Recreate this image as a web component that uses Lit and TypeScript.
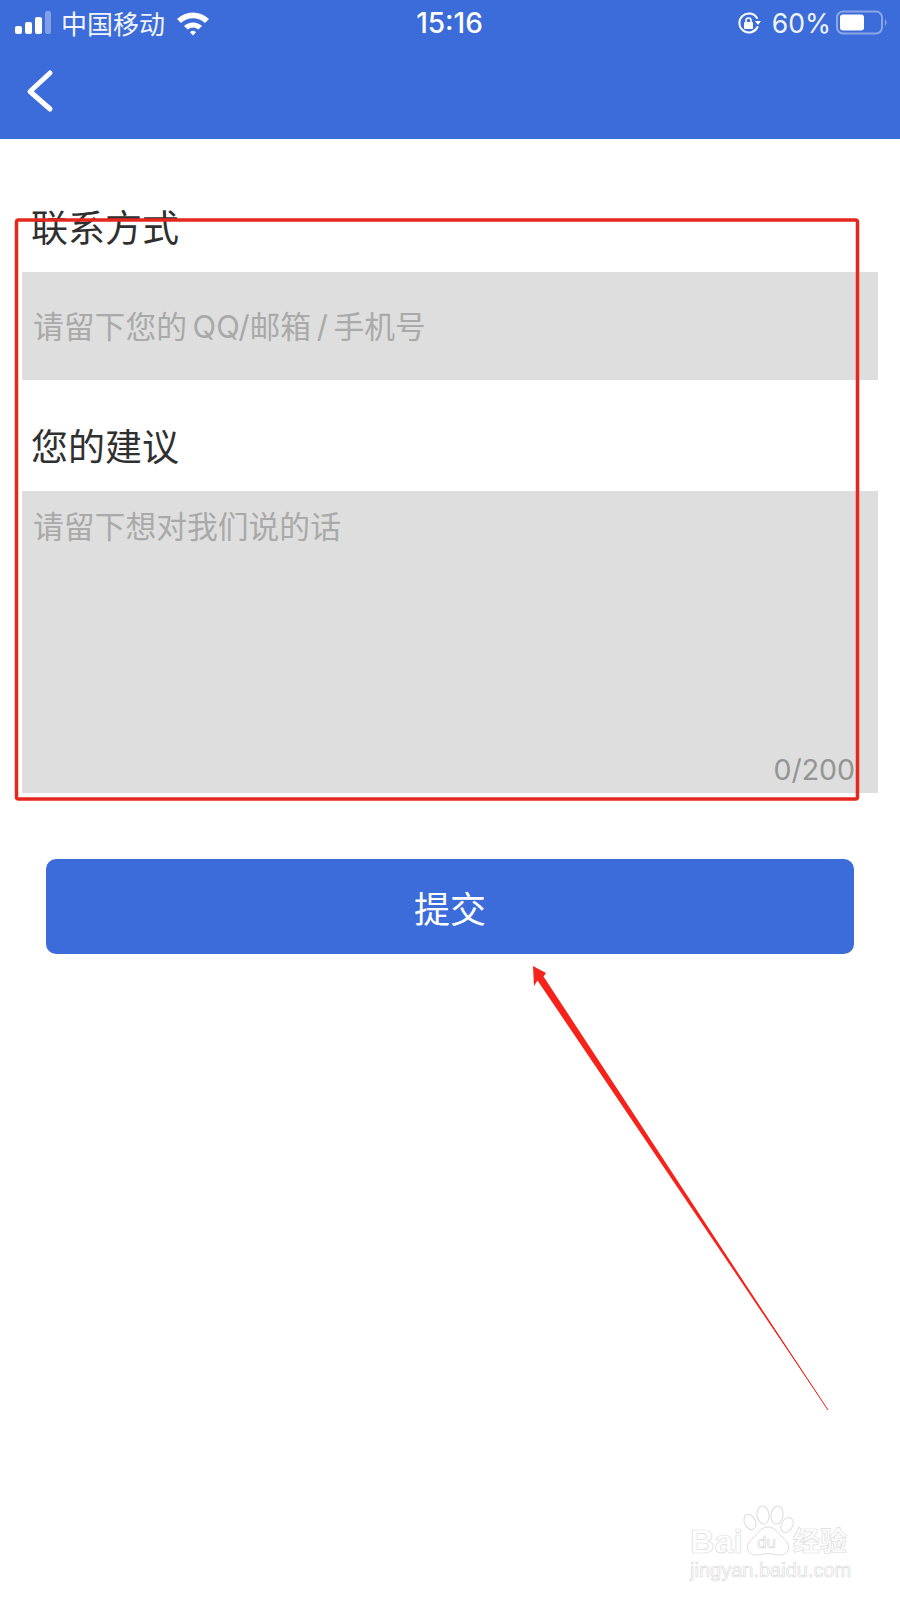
import { LitElement, html, css, svg } from "lit";
import { customElement } from "lit/decorators.js";

@customElement("app-root")
export class AppRoot extends LitElement {
  static styles = css`
    :host {
      display: block;
      position: relative;
      width: 900px;
      height: 1600px;
      overflow: hidden;
      background: #fff;
      font-family: "Noto Sans CJK SC", sans-serif;
    }
    header {
      background: #3c6cd9;
      height: 139px;
      color: #fff;
      display: flex;
      flex-direction: column;
    }
    .status {
      height: 46px;
      padding: 0 11px 0 15px;
      display: grid;
      grid-template-columns: 1fr auto 1fr;
      align-items: center;
    }
    .left, .right {
      display: flex;
      align-items: center;
    }
    .right { justify-content: flex-end; }
    .carrier {
      font-size: 26px;
      line-height: 46px;
      margin-left: 10px;
      margin-right: 11px;
      color: #f1f4fc;
    }
    .time {
      font-family: "Inter", sans-serif;
      font-size: 28px;
      font-weight: 500;
      line-height: 46px;
      margin-right: 5px;
    }
    .pct {
      font-family: "Inter", sans-serif;
      font-size: 26.5px;
      line-height: 46px;
      margin: 0 5px 0 11px;
      color: #f1f4fc;
    }
    .nav {
      padding: 23px 0 0 26px;
    }
    .nav svg { display: block; }
    main {
      padding: 64px 22px 0;
      display: flex;
      flex-direction: column;
    }
    .label {
      font-size: 37px;
      line-height: 46px;
      color: #303030;
      padding-left: 9px;
      margin-bottom: 23px;
    }
    .field {
      background: #dedede;
      color: #a9a9a9;
      font-family: "Inter", "Noto Sans CJK SC", sans-serif;
      font-size: 30.8px;
      padding: 0 11px;
      box-sizing: border-box;
    }
    .single {
      height: 108px;
      display: flex;
      align-items: center;
      padding-bottom: 4px;
      margin-bottom: 42px;
      white-space: pre;
    }
    .multi {
      height: 302px;
      padding-top: 14px;
      line-height: 44px;
      position: relative;
    }
    .count {
      position: absolute;
      right: 23px;
      bottom: 3px;
      font-family: "Inter", sans-serif;
      font-size: 28.5px;
      line-height: 40px;
      color: #949494;
    }
    .submit {
      all: unset;
      box-sizing: border-box;
      display: flex;
      align-items: center;
      justify-content: center;
      margin: 66px 24px 0;
      height: 95px;
      border-radius: 10px;
      background: #3c6cd9;
      color: #fff;
      font-size: 36px;
    }
    .overlay {
      position: absolute;
      left: 0;
      top: 0;
      pointer-events: none;
    }
    .mark {
      position: absolute;
      left: 690px;
      top: 1505px;
      width: 170px;
      height: 90px;
      color: transparent;
      -webkit-text-stroke: 0.7px #dcdcdc;
    }
    .mark .baidu {
      position: absolute;
      left: 0;
      top: 11px;
      font-family: "Liberation Sans", sans-serif;
      font-size: 34px;
      font-weight: 700;
      line-height: 50px;
    }
    .mark .du {
      position: absolute;
      left: 67px;
      top: 26px;
      font-family: "Liberation Sans", sans-serif;
      font-size: 17px;
      line-height: 24px;
    }
    .mark .jy {
      position: absolute;
      left: 103px;
      top: 16px;
      font-size: 27px;
      font-weight: 700;
      line-height: 38px;
      white-space: nowrap;
    }
    .mark .url {
      position: absolute;
      left: 0;
      top: 51px;
      font-family: "Liberation Sans", sans-serif;
      font-size: 20px;
      line-height: 28px;
      white-space: nowrap;
    }
    .paw {
      position: absolute;
      left: 0;
      top: 0;
    }
  `;

  private signal() {
    return html`<svg width="36" height="24" viewBox="0 0 36 24">
      <rect x="0" y="15" width="7" height="8" rx="2" fill="#fff" />
      <rect x="10" y="11" width="7" height="12" rx="2" fill="#fff" />
      <rect x="20" y="6" width="7" height="17" rx="2" fill="#fff" />
      <rect x="30" y="0" width="6" height="23" rx="2" fill="#fff" opacity=".35" />
    </svg>`;
  }

  private wifi() {
    return html`<svg width="34" height="26" viewBox="0 0 34 26">
      <path d="M1 9 A23 23 0 0 1 33 9 L29 13 A17.5 17.5 0 0 0 5 13 Z" fill="#fff" />
      <path d="M8 16 A13 13 0 0 1 26 16 L22.3 19.6 A8 8 0 0 0 11.7 19.6 Z" fill="#fff" />
      <path d="M14 22.2 A4.4 4.4 0 0 1 20 22.2 L17 25.5 Z" fill="#fff" />
    </svg>`;
  }

  private lock() {
    return html`<svg width="24" height="24" viewBox="0 0 24 24" fill="none">
      <path d="M20.5 16 A9.5 9.5 0 1 1 20 7" stroke="#fff" stroke-width="2" stroke-linecap="round" />
      <path d="M18 10 L24 10 L21 14 Z" fill="#fff" />
      <rect x="7" y="11" width="9" height="7" rx="1" fill="#fff" />
      <path d="M9 11 V9.5 A2.5 2.5 0 0 1 14 9.5 V11" stroke="#fff" stroke-width="1.6" />
    </svg>`;
  }

  private battery() {
    return html`<svg width="53" height="26" viewBox="0 0 53 26">
      <rect x="1" y="1.5" width="45" height="22" rx="6" fill="none" stroke="#fff" stroke-opacity=".4" stroke-width="2" />
      <rect x="4" y="4.5" width="24" height="16" rx="3" fill="#fff" />
      <path d="M49 9 Q52 12.5 49 16 Z" fill="#fff" fill-opacity=".45" />
    </svg>`;
  }

  private chevron() {
    return html`<svg width="30" height="44" viewBox="0 0 30 44" fill="none">
      <path d="M24 4 L4 22.5 L24 40" stroke="#fff" stroke-width="5" stroke-linecap="round" stroke-linejoin="round" />
    </svg>`;
  }

  private annotations() {
    return html`<svg class="overlay" width="900" height="1600" viewBox="0 0 900 1600">
      <rect x="16.5" y="220" width="841" height="579" rx="2" fill="none" stroke="#e5281d" stroke-width="3.5" />
      <path d="M533 966 L546 973 L543.5 976.5 L828 1410 L537.5 980.5 L534 986 Z" fill="#f5231a" />
      <path d="M690 1202 L828 1410" stroke="#f5231a" stroke-width="1" fill="none" />
    </svg>`;
  }

  private paw() {
    const p = (cx: number, cy: number, rx: number, ry: number, r: number) =>
      svg`<ellipse cx=${cx} cy=${cy} rx=${rx} ry=${ry} transform="rotate(${r} ${cx} ${cy})" />`;
    return html`<svg class="paw" width="170" height="60" viewBox="0 0 170 60" fill="#fff" stroke="#dcdcdc" stroke-width="1">
      ${p(60, 17, 5.5, 8, -25)}
      ${p(73, 10, 6, 9, -8)}
      ${p(87, 10, 6, 9, 8)}
      ${p(97, 20, 5.5, 8, 30)}
      <path d="M78 22 C86 22 88 29 94 34 C102 41 99 50 90 50 C85 50 82 48.5 78 48.5 C74 48.5 71 50 66 50 C57 50 54 41 62 34 C68 29 70 22 78 22 Z" />
    </svg>`;
  }

  render() {
    return html`
      <header>
        <div class="status">
          <div class="left">
            ${this.signal()}
            <span class="carrier">中国移动</span>
            ${this.wifi()}
          </div>
          <div class="time">15:16</div>
          <div class="right">
            ${this.lock()}
            <span class="pct">60%</span>
            ${this.battery()}
          </div>
        </div>
        <div class="nav">${this.chevron()}</div>
      </header>
      <main>
        <div class="label">联系方式</div>
        <div class="field single">请留下您的\u2009QQ/邮箱\u2009/\u2009手机号</div>
        <div class="label">您的建议</div>
        <div class="field multi">
          请留下想对我们说的话
          <span class="count">0/200</span>
        </div>
        <button class="submit">提交</button>
      </main>
      ${this.annotations()}
      <div class="mark">
        ${this.paw()}
        <span class="baidu">Bai</span>
        <span class="du">du</span>
        <span class="jy">经验</span>
        <span class="url">jingyan.baidu.com</span>
      </div>
    `;
  }
}
